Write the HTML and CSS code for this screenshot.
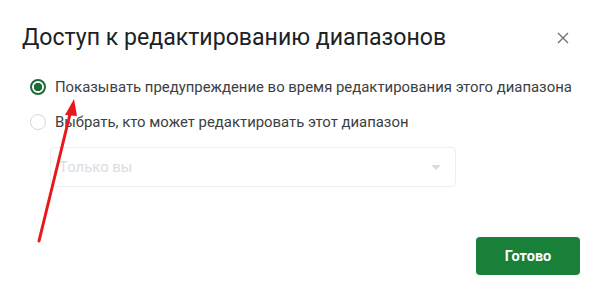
FILE: index.html
```html
<!DOCTYPE html>
<html lang="ru">
<head>
    <meta charset="UTF-8">
    <title>Доступ к редактированию диапазонов</title>
    <link rel="stylesheet" href="styles.css">
</head>
<body>

<div class="dialog">
    <div class="header">
        <h2>Доступ к редактированию диапазонов</h2>
        <span class="close">
            <svg width="12" height="12" viewBox="0 0 12 12">
                <path d="M1 1 L11 11 M11 1 L1 11" stroke="#6f7378" stroke-width="1.4" fill="none"/>
            </svg>
        </span>
    </div>

    <div class="options">
        <label class="option">
            <span class="radio checked"></span>
            <span>Показывать предупреждение во время редактирования этого диапазона</span>
        </label>
        <label class="option">
            <span class="radio"></span>
            <span>Выбрать, кто может редактировать этот диапазон</span>
        </label>
        <div class="select">
            <span>Только вы</span>
            <span class="caret"></span>
        </div>
    </div>

    <div class="footer">
        <button type="button">Готово</button>
    </div>
</div>

<!-- red annotation arrow drawn over the dialog -->
<svg class="arrow" width="600" height="296" viewBox="0 0 600 296">
    <line x1="39" y1="241" x2="71" y2="110" stroke="#e8191c" stroke-width="3" stroke-linecap="round"/>
    <polygon points="74,99 65,115 77,116" fill="#e8191c"/>
</svg>

</body>
</html>
```

FILE: styles.css
```css
* {
    margin: 0;
    padding: 0;
    box-sizing: border-box;
}
body {
    font-family: Roboto, "Liberation Sans", sans-serif;
    background: #fff;
    width: 600px;
    height: 296px;
    overflow: hidden;
    position: relative;
}
.dialog {
    padding: 24px 20px 0 22px;
}
.header {
    display: flex;
    justify-content: space-between;
    align-items: center;
    padding-right: 11px;
}
h2 {
    font-weight: 400;
    font-size: 23.1px;
    color: #202124;
    line-height: 28px;
}
.close {
    display: flex;
}
.options {
    margin-top: 25px;
    padding-left: 8px;
}
.option {
    display: flex;
    align-items: center;
    gap: 9px;
    font-size: 14.9px;
    color: #3c4043;
    height: 20px;
    margin-bottom: 15px;
}
.radio {
    width: 16px;
    height: 16px;
    border-radius: 50%;
    border: 1.5px solid #d5d7da;
    flex-shrink: 0;
}
.radio.checked {
    border: 2px solid #1e6b3a;
    background: radial-gradient(circle, #1e6b3a 0 4px, transparent 4.5px);
}
.select {
    margin: 10px 0 0 20px;
    width: 406px;
    height: 40px;
    border: 1px solid #eceef0;
    border-radius: 4px;
    display: flex;
    align-items: center;
    justify-content: space-between;
    padding: 0 14px 0 8px;
    font-size: 14.9px;
    color: #dadce0;
}
.caret {
    width: 0;
    height: 0;
    border-left: 5px solid transparent;
    border-right: 5px solid transparent;
    border-top: 5px solid #dadce0;
}
.footer {
    display: flex;
    justify-content: flex-end;
    margin-top: 50px;
}
button {
    width: 104px;
    height: 38px;
    background: #188038;
    color: #fff;
    border: none;
    border-radius: 4px;
    font-family: Roboto, sans-serif;
    font-weight: 700;
    font-size: 14.5px;
}
.arrow {
    position: absolute;
    left: 0;
    top: 0;
    pointer-events: none;
}
```
